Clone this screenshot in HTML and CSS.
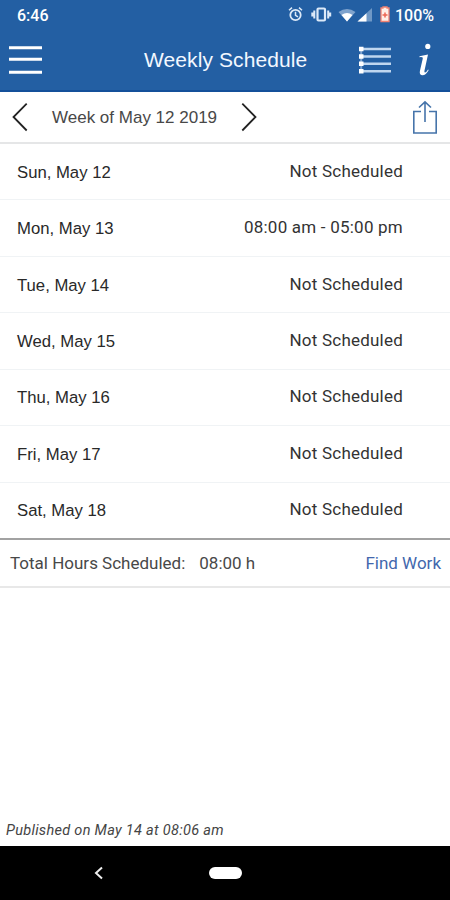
FILE: index.html
```html
<!DOCTYPE html>
<html lang="en">
<head>
<meta charset="utf-8">
<title>Weekly Schedule</title>
<link rel="stylesheet" href="styles.css">
</head>
<body>
<div class="phone">
  <div class="status">
    <span class="clock">6:46</span>
    <svg class="status-icons" width="104" height="20" viewBox="0 0 104 20" fill="none" stroke="#dce9f8">
      <circle cx="7.5" cy="10" r="5.2" stroke-width="1.8"/>
      <path d="M1 5.200l3-2.600M14 5.200l-3-2.600M7.500 6.800v3.600l2.500 1.500" stroke-width="1.500"/>
      <rect x="29.500" y="3.500" width="7.500" height="12" rx="1" stroke-width="2.200"/>
      <path d="M26.300 5.500v8M40.200 5.500v8M24.300 7.500v4M42.200 7.500v4" stroke-width="2"/>
      <path d="M50.500 7.100Q59 1 67.500 7.100L59 16.500z" fill="#7fa3cd" stroke="none"/>
      <path d="M53.500 10Q59 6 64.500 10L59 16.500z" fill="#fff" stroke="none"/>
      <path d="M69.500 16.500L84 3v13.500z" fill="#6f98c6" stroke="none"/>
      <path d="M69.500 16.500L78.500 8.200v8.300z" fill="#fff" stroke="none"/>
      <path d="M93 3h2V2h4v1h2v13.500h-8z" fill="#ffefe8" stroke="#f08272" stroke-width="1.300"/>
      <path d="M97 7.500v5M94.500 10h5" stroke="#ed6653" stroke-width="1.500"/>
    </svg>
    <span class="battery">100%</span>
  </div>
  <header class="header">
    <svg class="menu" width="34" height="32" viewBox="0 0 34 32" stroke="#fff" stroke-width="3"><path d="M1 3.800h33M1 15.300h33M1 28.200h33"/></svg>
    <h1 class="title">Weekly Schedule</h1>
    <svg class="list" width="34" height="30" viewBox="0 0 34 30">
      <path d="M5 4h28M5 11.500h28M5 18.700h28M5 26.200h28" stroke="#bfd6ef" stroke-width="2.400"/>
      <path d="M3.200 4v23" stroke="#7fa5d2" stroke-width="2"/>
      <path d="M1 4h4.500M1 11.500h4.500M1 18.700h4.500M1 26.200h4.500" stroke="#fff" stroke-width="4.500"/>
    </svg>
    <svg class="info" width="16" height="34" viewBox="0 0 16 34" fill="#fff">
      <circle cx="9.800" cy="3.400" r="2.600"/>
      <path d="M1.500 13.300L10 11.600 6.500 27.500Q6 30 7.300 29.500 8.800 28.800 10 26.500L10.700 27Q7.800 32.600 4 32.300 1.200 31.800 1.900 28L4.800 15.500Q5.200 13.800 1.500 14.200z"/>
    </svg>
  </header>
  <nav class="week">
    <svg class="prev" width="16" height="30" viewBox="0 0 16 30" fill="none" stroke="#222" stroke-width="1.800"><path d="M14.700 1.700L1.500 15l13.200 13.500"/></svg>
    <span class="week-label">Week of May 12 2019</span>
    <svg class="next" width="16" height="30" viewBox="0 0 16 30" fill="none" stroke="#222" stroke-width="1.800"><path d="M1.300 1.700L14.500 15 1.300 28.500"/></svg>
    <svg class="share" width="26" height="34" viewBox="0 0 26 34" fill="none" stroke="#4674aa" stroke-width="1.600"><path d="M9 11.500H1.800V33H24.200V11.500H17M13 22V2M7 7.500L13 1.800l6 5.700"/></svg>
  </nav>
  <main class="days">
    <div class="day"><span class="date">Sun, May 12</span><span class="shift">Not Scheduled</span></div>
    <div class="day"><span class="date">Mon, May 13</span><span class="shift">08:00 am - 05:00 pm</span></div>
    <div class="day"><span class="date">Tue, May 14</span><span class="shift">Not Scheduled</span></div>
    <div class="day"><span class="date">Wed, May 15</span><span class="shift">Not Scheduled</span></div>
    <div class="day"><span class="date">Thu, May 16</span><span class="shift">Not Scheduled</span></div>
    <div class="day"><span class="date">Fri, May 17</span><span class="shift">Not Scheduled</span></div>
    <div class="day"><span class="date">Sat, May 18</span><span class="shift">Not Scheduled</span></div>
  </main>
  <div class="total"><span class="total-label">Total Hours Scheduled:</span><span class="total-hours">08:00 h</span><span class="find">Find Work</span></div>
  <p class="published">Published on May 14 at 08:06 am</p>
  <footer class="system-nav">
    <svg class="back" width="10" height="14" viewBox="0 0 10 14" fill="none" stroke="#eee" stroke-width="2"><path d="M8 1.500L2 7l6 5.500"/></svg>
    <span class="home"></span>
  </footer>
</div>
</body>
</html>
```
FILE: styles.css
```css
* { box-sizing: border-box; }
body { margin: 0; background: #fff; }
.phone {
  width: 450px;
  height: 900px;
  display: flex;
  flex-direction: column;
  font-family: Roboto, sans-serif;
  font-size: 17px;
  color: #333;
  white-space: nowrap;
}
.status {
  height: 30px;
  flex: none;
  display: flex;
  align-items: center;
  background: #235fa3;
  color: #fff;
  font-size: 16px;
  font-weight: 500;
}
.clock { margin-left: 17px; width: 271px; }
.battery { margin-left: 3px; }
.header {
  height: 62px;
  flex: none;
  display: flex;
  align-items: center;
  background: #235fa3;
  border-bottom: 2px solid #14509a;
}
.menu { margin-left: 8px; }
.title {
  margin: 0 0 0 102px;
  width: 214px;
  color: #f3f8ff;
  font: 400 21px "Liberation Sans", sans-serif;
  letter-spacing: .1px;
}
.info { margin-left: 26px; }
.week {
  height: 52px;
  flex: none;
  display: flex;
  align-items: center;
  border-bottom: 2px solid #e5e6e7;
}
.prev { margin-left: 12px; }
.week-label {
  margin-left: 24px;
  width: 189px;
  padding-top: 1px;
  color: #484848;
  font-family: "Liberation Sans", sans-serif;
}
.share { margin-left: 155px; }
.days { flex: none; height: 396px; display: flex; flex-direction: column; border-bottom: 2px solid #a2a2a2; }
.day {
  flex: 1;
  display: flex;
  align-items: center;
  justify-content: space-between;
  padding: 0 47px 0 17px;
  border-bottom: 1px solid #f0f3f5;
}
.day:last-child { border-bottom: 0; }
.date { color: #292929; font-family: "Liberation Sans", sans-serif; font-size: 16.7px; padding-top: 2px; }
.shift { padding-bottom: 2px; letter-spacing: .22px; }
.total {
  height: 48px;
  flex: none;
  display: flex;
  align-items: center;
  padding: 0 9px 0 10px;
  border-bottom: 2px solid #e8e8e8;
  color: #484848;
}
.total-hours { margin-left: 14px; }
.find { margin-left: auto; color: #4267ad; }
.published { margin: auto 0 5px 6px; font-size: 14.5px; line-height: 20px; font-style: italic; letter-spacing: .3px; color: #444; }
.system-nav { height: 54px; flex: none; display: flex; align-items: center; background: #000; }
.back { margin-left: 94px; }
.home { margin-left: 105px; width: 33px; height: 12px; border-radius: 6px; background: #fff; }
```
